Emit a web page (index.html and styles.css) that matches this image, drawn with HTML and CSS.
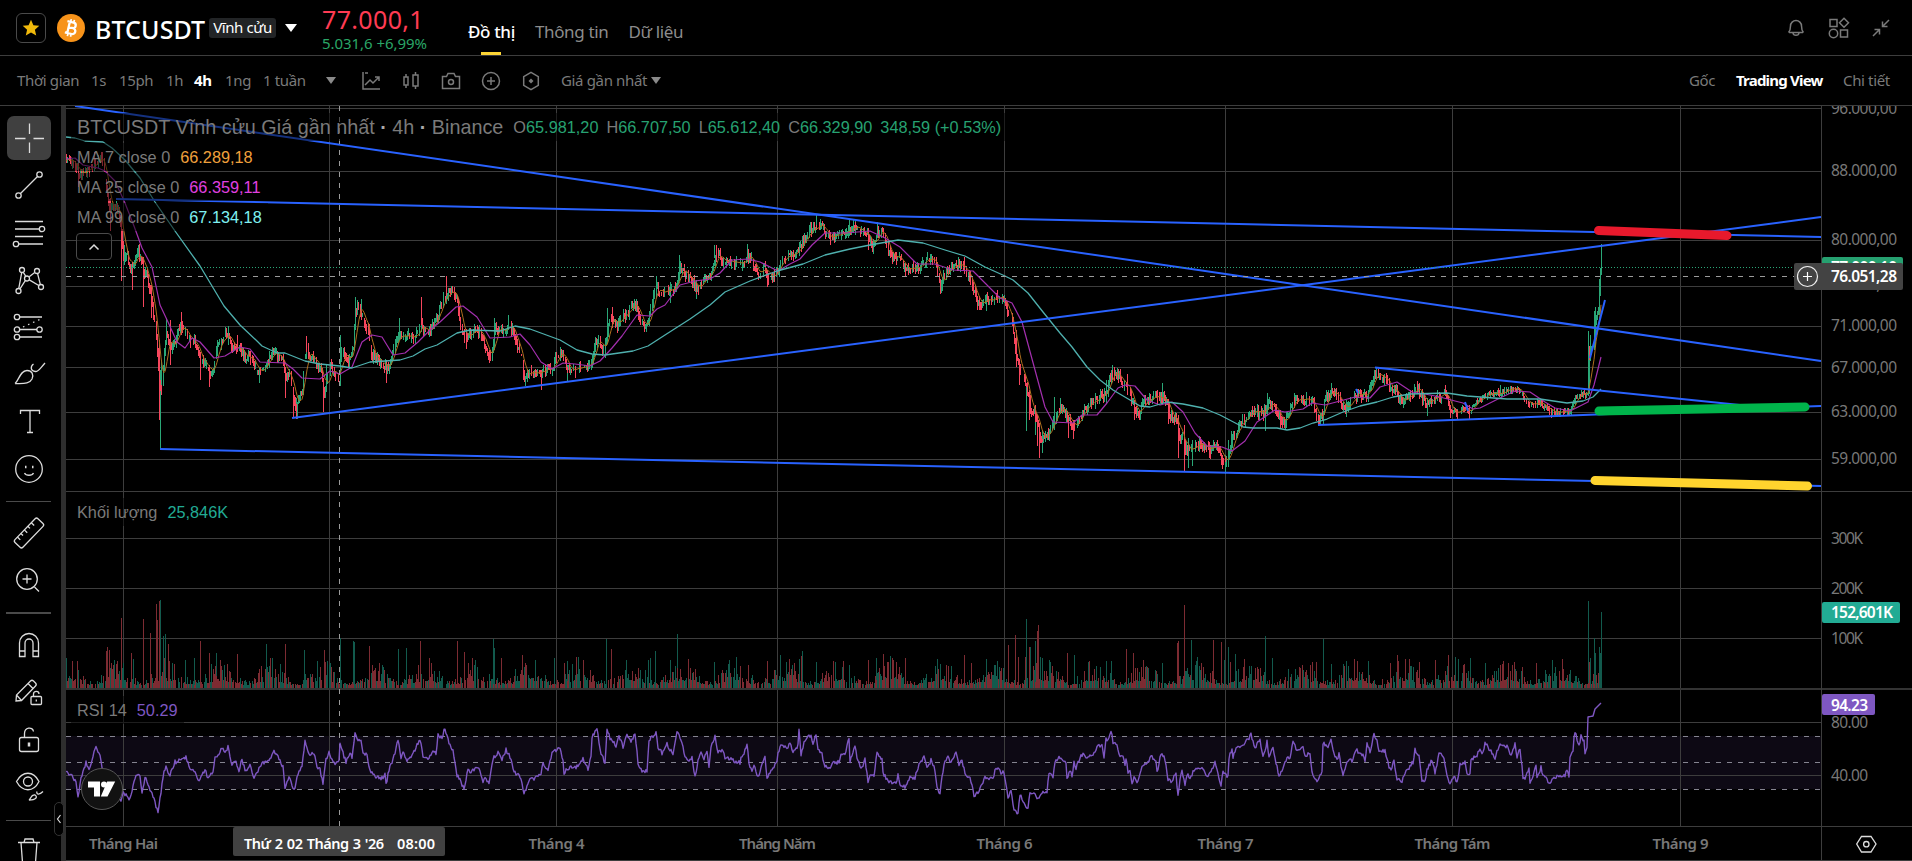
FILE: index.html
```
<!DOCTYPE html>
<html lang="vi">
  <head>
    <meta charset="UTF-8" />
    <meta name="viewport" content="width=device-width, initial-scale=1.0" />
    <title>77.000,1 | BTCUSDT Vĩnh cửu</title>
    <link rel="stylesheet" href="styles.css">
  </head>
  <body>
    <header class="topbar">
      <div class="star-box">
        <svg width="18" height="18" viewBox="0 0 18 18"><path d="M9 .8l2.4 5.4 5.9.6-4.4 3.9 1.3 5.8L9 13.5l-5.2 3 1.3-5.8L.7 6.8l5.9-.6z" fill="#f0b90b"/></svg>
      </div>
      <svg class="coin" width="28" height="28" viewBox="0 0 28 28">
        <circle cx="14" cy="14" r="14" fill="#f7931a"/>
        <g transform="rotate(13 14 14)" fill="none" stroke="#fff" stroke-width="2.3">
          <path d="M9 8.200h6.300a2.700 2.700 0 0 1 0 5.500H11.500M11.500 13.700h4.500a3 3 0 0 1 0 6H9M11.500 8v12"/>
          <path d="M12.300 5.300v3M15.500 5.300v3M12.300 19.700v3M15.500 19.700v3" stroke-width="1.700"/>
        </g>
      </svg>
      <h1 class="symbol">BTCUSDT</h1>
      <span class="badge">Vĩnh cửu</span>
      <i class="caret caret-lg"></i>
      <div class="price">
        <div class="price-last">77.000,1</div>
        <div class="price-change">5.031,6 +6,99%</div>
      </div>
      <nav class="tabs">
        <a class="tab tab-active">Đồ thị</a>
        <a class="tab">Thông tin</a>
        <a class="tab">Dữ liệu</a>
      </nav>
      <div class="top-icons">
        <svg width="18" height="20" viewBox="0 0 18 20"><path d="M2 14.500h14M1.500 14.500c2-2 2-3.500 2-6.500a5.500 5.500 0 0 1 11 0c0 3 0 4.500 2 6.500M6 15c.3 3 5.700 3 6 0"/></svg>
        <svg width="22" height="22" viewBox="0 0 22 22"><path d="M2 2.500h7v7H2zM12.500 13h7v7h-7zM16 1.300l4.500 4.500-4.500 4.500-4.500-4.500z"/><circle cx="5.500" cy="16.500" r="4.200"/></svg>
        <svg width="18" height="18" viewBox="0 0 18 18"><path d="M17 1l-6 6M10.500 2.500V7.500h5M1 17l6-6M2.500 10.500H7.500v5"/></svg>
      </div>
    </header>

    <div class="toolbar">
      <span class="t-time">Thời gian</span>
      <span class="t-1s">1s</span>
      <span class="t-15">15ph</span>
      <span class="t-1h">1h</span>
      <span class="t-4h active">4h</span>
      <span class="t-1d">1ng</span>
      <span class="t-1w">1 tuần</span>
      <i class="caret caret-grey"></i>
      <div class="tool-icons">
        <svg width="20" height="20" viewBox="0 0 20 20"><path d="M2 1v17h17M4 14l5-5 3 3 6-6M4 2h3M14 6h4v4"/></svg>
        <svg width="20" height="20" viewBox="0 0 20 20"><path d="M3 6h4v8H3zM5 3v3M5 14v3M12 4h5v11h-5zM14.500 1v3M14.500 15v3"/></svg>
        <svg width="20" height="20" viewBox="0 0 20 20"><path d="M1.500 5.500h4l1.500-3h6l1.500 3h4v12h-17z"/><circle cx="10" cy="11" r="2.500"/></svg>
        <svg width="20" height="20" viewBox="0 0 20 20"><circle cx="10" cy="10" r="8.500"/><path d="M10 6v8M6 10h8"/></svg>
        <svg width="20" height="20" viewBox="0 0 20 20"><path d="M10 1.300l7.300 4.300v8.800L10 18.700l-7.300-4.300V5.600z"/><path d="M10 7.500l2.500 2.500-2.500 2.500L7.500 10z" fill="#7a7a7a" stroke="none"/></svg>
      </div>
      <span class="t-last">Giá gần nhất</span>
      <i class="caret caret-grey caret-last"></i>
      <div class="views">
        <span class="v-org">Gốc</span>
        <span class="v-tv active">Trading View</span>
        <span class="v-det">Chi tiết</span>
      </div>
    </div>

    <main class="workspace">
      <aside class="draw-tools">
        <button class="draw selected"><svg viewBox="-22 -22 44 44"><path d="M-14 .5H-3.500M4.500 .5H15M.5-14.500V-4M.5 4.500V15"/></svg></button>
        <button class="draw"><svg viewBox="-22 -22 44 44"><circle cx="-10.500" cy="10.500" r="2.700"/><circle cx="10.500" cy="-10.500" r="2.700"/><path d="M-8.500 8.500l17-17"/></svg></button>
        <button class="draw"><svg viewBox="-22 -22 44 44"><path d="M-14-11.500H14M-14-4H10M-14 3.500H14M-10.500 11H14"/><circle cx="13" cy="-4" r="2.700"/><circle cx="-13" cy="11" r="2.700"/></svg></button>
        <button class="draw"><svg viewBox="-22 -22 44 44"><path d="M-10.200 8.300L-7.300-7.300M-5.700-7.700L-3.300-3.800M.2-3.200l5.500-4.200M8.600-6.400L11.300 4.300M.3-.1l9.500 5.600M-3.700 .6l-5.300 8.200"/><circle cx="-7" cy="-10" r="2.500"/><circle cx="8" cy="-9" r="2.500"/><circle cx="-2" cy="-1.500" r="2.500"/><circle cx="12" cy="7" r="2.500"/><circle cx="-10.500" cy="11" r="2.500"/></svg></button>
        <button class="draw"><svg viewBox="-22 -22 44 44"><path d="M-9.500-10H13M-9.500 2.500H8M-9.500 10H13"/><path d="M-6 0L13-8.500" stroke-dasharray="1.500 4"/><circle cx="-12" cy="-10" r="2.700"/><circle cx="-12" cy="2.500" r="2.700"/><circle cx="-12" cy="10" r="2.700"/><circle cx="10.500" cy="2.500" r="2.700"/></svg></button>
        <button class="draw"><svg viewBox="-22 -22 44 44"><path d="M-14 9.500c4-3 5-13 12-13 5 0 7 4 5 8.500-2 4-6 5-17 4.500M4.500-10c-3 2-3.500 7 2 7.500 3 .2 4-2.500 9.500-8.500"/></svg></button>
        <button class="draw"><svg viewBox="-22 -22 44 44"><path d="M-8.500-8v-3.500h19V-8M1-11.500V10.500M-2 10.500h6"/></svg></button>
        <button class="draw"><svg viewBox="-22 -22 44 44"><circle cx="0" cy="0" r="13.300"/><path d="M-4.500 4c1.500 3 7.500 3 9 0"/><path d="M-4-2h1.500M3-2h1.500" stroke-width="2.500"/></svg></button>
        <hr class="rule" />
        <button class="draw"><svg viewBox="-22 -22 44 44"><g transform="rotate(-46)"><rect x="-16.500" y="-5.500" width="33" height="11" rx="2"/><path d="M-11-5.500v4M-6-5.500v3M-1-5.500v4M4-5.500v3M9-5.500v4"/></g></svg></button>
        <button class="draw"><svg viewBox="-22 -22 44 44"><circle cx="-2" cy="-1" r="10.300"/><path d="M5.500 7l4.500 4.500M-6.500-1h9M-2-5.500v9"/></svg></button>
        <hr class="rule rule-bold" />
        <button class="draw"><svg viewBox="-22 -22 44 44"><path d="M-9.500 11.500V-2a9.500 9.500 0 0 1 19 0v13.500H4V-2a4 4 0 0 0-8 0v13.500zM-9.500 6H-4M4 6h5.500"/></svg></button>
        <button class="draw"><svg viewBox="-22 -22 44 44"><path d="M-13 8l.5-6L1.500-12c1-1 2-1 3 0l2 2c1 1 1 2 0 3L-7.500 7.500zM-12.500 2l5 5.500M-1-9.500l5 5"/><rect x="2" y="3.500" width="10.500" height="8" rx="1"/><path d="M4.500 3.500V1c0-3.500 5.500-3.500 5.500 0M7.300 6.500v2"/></svg></button>
        <button class="draw"><svg viewBox="-22 -22 44 44"><rect x="-9.500" y="-2.500" width="19" height="14" rx="2"/><path d="M-4.500-2.500v-4c0-6 8-7.500 9-2"/><path d="M0 2.500v4" stroke-width="2.500"/></svg></button>
        <button class="draw"><svg viewBox="-22 -22 44 44"><path d="M-12.500-5.500c6-11 17-11 22.500 0-5.500 11-16.500 11-22.500 0z"/><circle cx="-1" cy="-5.500" r="4.500"/><path d="M0 13c2-1 2-6 6-5 3 2 1 5-6 5zM8 4.500c-1 3 2 4 6 0"/></svg></button>
        <hr class="rule rule-low" />
        <button class="draw"><svg viewBox="-22 -22 44 44"><path d="M-11-9.500h22M-5-9.500l1-3.500h8l1 3.500M-8-9.500l1.500 20h13L8-9.500"/></svg></button>
        <div class="collapse"><svg width="6" height="10" viewBox="0 0 6 10"><path d="M4.500 1L1.500 5l3 4"/></svg></div>
      </aside>

      <section class="chart-area">
        <svg id="chart" viewBox="66 106 1846 755"></svg>

        <div class="legend legend-price">
          <div class="legend-row legend-title">
            <span class="name">BTCUSDT Vĩnh cửu Giá gần nhất <b>·</b> 4h <b>·</b> Binance</span>
            <span class="ohlc">O<em>65.981,20</em></span>
            <span class="ohlc">H<em>66.707,50</em></span>
            <span class="ohlc">L<em>65.612,40</em></span>
            <span class="ohlc">C<em>66.329,90</em></span>
            <span class="ohlc"><em>348,59 (+0.53%)</em></span>
          </div>
          <div class="legend-row">MA 7 close 0<span class="ma7">66.289,18</span></div>
          <div class="legend-row">MA 25 close 0<span class="ma25">66.359,11</span></div>
          <div class="legend-row">MA 99 close 0<span class="ma99">67.134,18</span></div>
          <button class="legend-toggle"><svg width="12" height="8" viewBox="0 0 12 8"><path d="M1.500 6.500L6 2l4.500 4.500"/></svg></button>
        </div>
        <div class="legend legend-volume">
          <div class="legend-row">Khối lượng<span class="vol">25,846K</span></div>
        </div>
        <div class="legend legend-rsi">
          <div class="legend-row">RSI 14<span class="rsi">50.29</span></div>
        </div>
        <div class="tv-logo">
          <svg width="28" height="16" viewBox="0 0 28 16"><path d="M0 .5h12v15H6V6.500H0zM19.500 15.500h-6.700L19.200.5h8z"/><circle cx="16" cy="3.500" r="3"/></svg>
        </div>
      </section>
    </main>
    <script src="chart.js"></script>
  </body>
</html>
```
FILE: styles.css
```
* {
  box-sizing: border-box;
}

html,
body {
  height: 100%;
  margin: 0;
  padding: 0;
  overflow: hidden;
}

body {
  display: flex;
  flex-direction: column;
  background: #000;
  color: #7a7a7a;
  font-family: "Noto Sans", "Open Sans", sans-serif;
  font-size: 15px;
}

svg {
  display: block;
  flex: none;
}

/* header */
.topbar {
  display: flex;
  align-items: flex-start;
  height: 56px;
  flex: none;
  padding-left: 16px;
  border-bottom: 1px solid #3d3d3d;
  white-space: nowrap;
}

.star-box {
  display: flex;
  align-items: center;
  justify-content: center;
  width: 30px;
  height: 30px;
  margin-top: 13px;
  border: 1px solid #4a4a4a;
  border-radius: 6px;
}

.coin {
  margin: 14px 0 0 11px;
}

.symbol {
  width: 114px;
  margin: 13px 0 0 10px;
  font-size: 25px;
  font-weight: 500;
  line-height: 33px;
  letter-spacing: 0.1px;
  color: #fff;
}

.badge {
  width: 67px;
  height: 20px;
  margin-top: 18px;
  border-radius: 3px;
  background: #222426;
  color: #fff;
  font-size: 15px;
  line-height: 19px;
  letter-spacing: -0.4px;
  text-align: center;
}

.caret {
  width: 0;
  height: 0;
  border: 6px solid transparent;
  border-top: 8px solid #fff;
  border-bottom: 0;
}

.caret-lg {
  margin: 24px 0 0 9px;
}

.price {
  width: 146px;
  margin-left: 25px;
}

.price-last {
  margin-top: 4px;
  font-size: 25px;
  line-height: 30px;
  letter-spacing: 0.35px;
  color: #ff3b53;
}

.price-change {
  font-size: 15px;
  line-height: 18px;
  letter-spacing: -0.05px;
  color: #2aa667;
}

.tabs {
  display: flex;
  gap: 20px;
}

.tab {
  display: flex;
  flex-direction: column;
  align-items: center;
  height: 55px;
  padding-top: 20px;
  color: #8c8c8c;
  font-size: 17px;
  line-height: 24px;
  letter-spacing: -0.35px;
}

.tab-active {
  color: #fff;
  font-weight: 500;
}

.tab-active::after {
  content: "";
  width: 20px;
  height: 3px;
  margin-top: 8px;
  background: #fcd535;
}

.top-icons {
  display: flex;
  align-items: center;
  gap: 22px;
  height: 55px;
  margin-left: auto;
  padding-right: 22px;
}

.top-icons svg:first-child {
  margin-right: 1px;
}

.top-icons svg,
.tool-icons svg {
  fill: none;
  stroke: #7a7a7a;
  stroke-width: 1.5;
}

/* interval bar */
.toolbar {
  display: flex;
  align-items: center;
  flex: none;
  height: 50px;
  padding-left: 17px;
  border-bottom: 1px solid #3d3d3d;
  white-space: nowrap;
  letter-spacing: -0.35px;
}

.toolbar span {
  flex: none;
  margin-top: -2px;
}

.active {
  color: #fff;
  font-weight: 700;
}

.t-time { width: 74px; }
.t-1s { width: 28px; }
.t-15 { width: 47px; }
.t-1h { width: 28px; }
.t-4h { width: 31px; }
.t-1d { width: 38px; }
.t-1w { width: 63px; }
.t-last { width: 90px; }

.caret-grey {
  border-width: 5px;
  border-top: 7px solid #8a8a8a;
  border-bottom: 0;
}

.tool-icons {
  display: flex;
  gap: 20px;
  margin: 0 20px 0 25px;
}

.views {
  display: flex;
  margin-left: auto;
}

.v-org { width: 47px; }
.v-tv {
  width: 107px;
  letter-spacing: -0.8px;
}
.v-det { width: 69px; }

/* left rail */
.workspace {
  display: flex;
  flex: 1;
  min-height: 0;
}

.draw-tools {
  position: relative;
  display: flex;
  flex-direction: column;
  align-items: center;
  flex: none;
  width: 66px;
  padding: 8.300px 4px 0 0;
  border-right: 5px solid #2e2e2e;
}

.draw {
  display: flex;
  align-items: center;
  justify-content: center;
  flex: none;
  width: 44px;
  height: 47.300px;
  padding: 0;
  border: 0;
  background: none;
}

.draw svg {
  width: 44px;
  height: 44px;
  fill: none;
  stroke: #dcdcdc;
  stroke-width: 1.3;
}

.selected svg {
  border-radius: 7px;
  background: #404040;
}

.rule {
  flex: none;
  width: 45px;
  height: 1px;
  margin: 8px 0 7.700px;
  border: 0;
  background: #4a4a4a;
}

.rule-bold {
  height: 2px;
}

.rule-low {
  margin: 9px 0 8px;
}

.collapse {
  position: absolute;
  left: 54px;
  top: 696px;
  display: flex;
  align-items: center;
  justify-content: center;
  width: 10px;
  height: 34px;
  border: 1px solid #333;
  border-radius: 5px;
  background: #000;
}

.collapse svg {
  fill: none;
  stroke: #ddd;
  stroke-width: 1.2;
}

/* chart */
.chart-area {
  position: relative;
  flex: 1;
}

#chart {
  width: 1846px;
  height: 755px;
}

.grid {
  fill: none;
  stroke: #3d3d3d;
  shape-rendering: crispEdges;
}

.cross {
  stroke: #9b9b9b;
  stroke-dasharray: 5 6;
  shape-rendering: crispEdges;
}

.bars {
  fill: none;
  shape-rendering: crispEdges;
}

.line {
  fill: none;
  stroke-linejoin: round;
}

.trend {
  stroke: #2962ff;
  stroke-width: 2;
}

.marker {
  stroke-width: 9;
  stroke-linecap: round;
}

.axis-text {
  fill: #787878;
  font-family: "Noto Sans", sans-serif;
  font-size: 15.500px;
}

.axis-month {
  font-size: 15px;
  font-weight: 600;
  text-anchor: middle;
}

.axis-tag {
  fill: #fff;
  font-weight: 600;
}

.axis-time {
  font-size: 14.500px;
  word-spacing: 1px;
}

.legend {
  position: absolute;
  left: 5px;
  font-family: "Liberation Sans", Arial, sans-serif;
  font-size: 16.300px;
}

.legend-price {
  top: 7px;
}

.legend-volume {
  top: 392px;
}

.legend-rsi {
  top: 590px;
}

.legend-row {
  display: flex;
  align-items: center;
  width: fit-content;
  height: 28px;
  margin-bottom: 2px;
  padding: 0 6px;
  background: rgba(0, 0, 0, 0.5);
  white-space: nowrap;
}

.legend-row > span {
  margin-left: 10px;
}

.legend-title .name {
  margin-left: 0;
  font-size: 19.800px;
}

.legend-title .ohlc {
  margin-left: 8px;
}

.legend-title .name + .ohlc {
  margin-left: 10px;
}

.legend-title b {
  color: #aaa;
}

.legend em {
  color: #27a272;
  font-style: normal;
}

.ma7 { color: #f0a03c; }
.ma25 { color: #e040e0; }
.ma99 { color: #7ff0f0; }
.vol { color: #22ab94; }
.rsi { color: #7e57c2; }

.legend-toggle {
  display: flex;
  align-items: center;
  justify-content: center;
  width: 36px;
  height: 27px;
  margin: 2px 0 0 5px;
  border: 1px solid #4a4a4a;
  border-radius: 4px;
  background: rgba(0, 0, 0, 0.5);
}

.legend-toggle svg {
  fill: none;
  stroke: #ddd;
  stroke-width: 1.5;
}

.tv-logo {
  position: absolute;
  left: 15px;
  top: 662px;
  display: flex;
  align-items: center;
  justify-content: center;
  width: 42px;
  height: 42px;
  border: 1px solid #565656;
  border-radius: 50%;
  background: #121212;
}

.tv-logo svg {
  fill: #fff;
}
```
FILE: chart.js
```
const chart = document.getElementById("chart");
const LEFT = 66;
const RIGHT = 1821;
const LAST = 1601;
const UP = "#2aa777";
const DOWN = "#f6465d";

// close line of the price pane, "x,y" pairs
const price = parse(`66,158 70,160 75,165 79,175 84,172 89,170 95,163 99,157 103,162 106,187 109,210 113,207 118,208 121,233 123,257 127,252
129,267 133,267 136,253 138,252 141,257 144,273 146,267 149,287 153,313 156,333 159,383 161,393 163,367 166,333 170,347 173,347 177,333
181,323 184,330 187,335 191,343 195,342 199,357 202,363 205,362 210,373 213,367 216,348 221,343 224,335 228,333 231,348 236,347 240,350
245,357 249,355 254,367 259,372 262,367 267,362 271,355 277,355 282,357 286,377 289,373 293,393 296,410 298,397 302,390 304,360 307,347
310,360 314,358 318,367 321,372 324,393 327,377 330,365 334,372 337,380 339,373 341,347 345,357 347,363 350,355 353,347 355,313 357,303
361,313 364,322 368,330 371,355 377,357 380,362 386,367 389,367 393,348 396,340 399,333 404,338 409,335 414,340 418,327 421,323 425,330
429,330 433,323 437,320 440,303 445,297 448,292 453,293 457,300 459,320 462,330 466,338 471,332 477,330 481,333 486,348 491,357 495,327
499,330 504,330 508,325 512,327 516,343 521,357 524,377 529,373 536,372 541,375 546,367 552,370 556,357 560,350 563,355 566,367 570,372
577,368 588,367 592,357 595,343 598,337 601,347 604,353 608,323 610,318 613,318 617,327 622,313 625,317 630,307 636,303 640,323 645,327
648,320 652,300 657,287 660,293 665,290 672,290 677,282 680,267 683,270 687,277 693,282 697,290 702,280 708,277 712,270 715,255 718,253
722,263 727,258 733,262 742,263 747,255 752,260 755,270 760,275 764,265 768,278 773,275 778,270 782,257 790,255 797,253 800,247 805,237
810,230 816,225 822,225 827,238 833,238 840,235 849,230 856,227 862,232 867,235 872,247 877,233 882,230 888,250 893,257 898,257 903,265
907,268 913,268 920,265 927,260 935,263 940,287 943,277 948,268 957,263 963,267 968,277 973,290 977,302 987,300 997,297 1004,299 1008,313
1012,323 1016,353 1020,370 1025,383 1030,407 1037,417 1040,440 1045,437 1050,430 1053,420 1058,410 1060,403 1065,413 1070,423 1075,427
1080,415 1085,408 1092,403 1100,397 1107,393 1108,380 1113,372 1117,373 1122,382 1127,387 1132,402 1138,415 1143,403 1152,397 1162,397
1167,403 1170,418 1177,417 1179,440 1183,433 1185,450 1190,448 1200,443 1210,450 1217,443 1222,460 1227,462 1230,447 1233,437 1238,427
1245,417 1253,412 1263,413 1268,403 1277,410 1282,423 1287,417 1293,400 1303,398 1312,400 1317,417 1322,417 1325,397 1332,390 1338,397
1345,410 1350,400 1357,395 1367,395 1371,383 1376,373 1382,377 1387,382 1392,390 1396,387 1398,400 1405,398 1412,393 1417,387 1422,397
1427,403 1433,397 1440,397 1445,390 1450,410 1458,413 1463,407 1470,413 1473,403 1483,398 1490,393 1500,393 1505,390 1518,387 1523,397
1530,405 1538,402 1545,407 1552,412 1560,412 1570,411 1575,397 1583,393 1588,393 1589,357 1591,347 1594,343 1595,323 1598,307 1600,280 1601,262`);

// long wicks: x, top, bottom, up(1)/down(0)
const wicks = [
  [73, 160, 168, 0], [78, 175, 187, 0], [94, 152, 164, 0], [110, 198, 231, 0], [121, 232, 281, 0], [124, 245, 265, 1], [132, 262, 290, 0],
  [143, 257, 307, 0], [151, 285, 318, 0], [159, 340, 420, 0], [160, 370, 449, 1], [161, 360, 395, 1], [166, 318, 345, 1], [170, 320, 365, 0],
  [181, 312, 335, 0], [200, 352, 380, 0], [209, 365, 387, 0], [228, 326, 345, 1], [237, 335, 352, 0], [259, 370, 383, 1], [285, 372, 398, 0],
  [293, 390, 418, 0], [296, 398, 418, 1], [306, 336, 352, 0], [323, 378, 412, 0], [326, 365, 392, 1], [340, 335, 386, 1], [355, 297, 330, 1],
  [361, 299, 318, 1], [386, 365, 383, 0], [399, 318, 340, 1], [421, 297, 325, 0], [446, 276, 296, 0], [466, 330, 349, 0], [489, 350, 363, 0],
  [494, 318, 350, 1], [508, 315, 330, 1], [523, 360, 380, 0], [541, 370, 390, 0], [567, 365, 382, 1], [607, 308, 330, 1], [612, 307, 328, 0],
  [636, 299, 312, 1], [656, 276, 295, 1], [670, 282, 303, 1], [679, 255, 278, 1], [696, 280, 299, 1], [714, 245, 258, 1], [716, 245, 262, 0],
  [747, 244, 262, 1], [767, 270, 287, 0], [816, 214, 228, 1], [849, 219, 236, 1], [855, 221, 235, 1], [868, 235, 250, 0], [877, 222, 238, 1],
  [905, 265, 276, 0], [940, 280, 294, 0], [964, 257, 274, 0], [979, 300, 310, 0], [986, 295, 311, 1], [1016, 330, 367, 0], [1019, 360, 385, 0],
  [1026, 385, 431, 1], [1029, 398, 420, 0], [1035, 405, 435, 1], [1037, 420, 446, 0], [1039, 428, 458, 0], [1042, 430, 453, 1], [1054, 397, 430, 1],
  [1060, 398, 414, 1], [1068, 415, 438, 0], [1073, 420, 439, 0], [1106, 380, 404, 1], [1112, 365, 380, 1], [1127, 374, 395, 0], [1134, 400, 420, 0],
  [1162, 383, 398, 1], [1168, 400, 424, 0], [1178, 415, 458, 0], [1184, 425, 471, 0], [1188, 438, 468, 1], [1192, 440, 466, 1], [1210, 445, 459, 0],
  [1222, 455, 469, 0], [1225, 455, 474, 1], [1228, 440, 467, 1], [1231, 431, 450, 1], [1265, 405, 431, 1], [1267, 393, 412, 1], [1280, 410, 429, 0],
  [1294, 393, 402, 1], [1318, 415, 425, 0], [1331, 383, 392, 1], [1346, 400, 417, 1], [1376, 368, 380, 1], [1417, 381, 390, 0], [1427, 400, 416, 1],
  [1445, 385, 396, 0], [1450, 405, 418, 0], [1457, 410, 420, 0], [1469, 405, 419, 0], [1500, 385, 396, 1], [1551, 408, 418, 0], [1588, 331, 396, 1],
  [1589, 346, 360, 0], [1590, 335, 358, 1], [1594, 311, 350, 1], [1595, 307, 335, 1], [1599, 279, 315, 1], [1600, 268, 292, 1], [1601, 244, 275, 1],
];

const ma25 = `66,159 75,158 83,165 98,168 105,171 115,181 125,203 134,226 142,248 152,267 160,305 168,322 177,342 185,348 192,338 200,342 214,358
225,356 240,347 250,349 260,362 285,363 293,369 302,378 320,379 330,371 340,374 352,367 362,342 372,335 382,337 393,355 405,353 418,342 430,330
440,322 456,307 463,306 477,317 490,338 510,337 520,334 530,345 541,362 552,369 563,363 575,364 590,366 600,361 612,348 622,336 637,315 650,316
657,309 665,305 680,285 695,281 710,279 720,273 732,260 748,259 760,262 778,271 790,264 800,259 812,245 825,233 845,233 870,231 885,238 900,247
917,264 935,264 953,270 973,271 985,283 1000,298 1012,303 1022,322 1035,370 1045,407 1053,422 1073,423 1082,415 1097,415 1107,403 1118,388
1125,385 1135,386 1147,400 1160,405 1172,402 1183,412 1195,433 1207,446 1222,447 1232,451 1245,441 1257,422 1275,410 1285,412 1303,409 1312,403
1325,405 1340,401 1355,397 1370,398 1380,387 1397,382 1412,392 1425,394 1440,397 1455,401 1463,403 1473,409 1480,408 1500,398 1515,391 1530,392
1545,402 1555,408 1570,411 1580,406 1588,402 1594,385 1601,357`;

const ma99 = `66,137 75,138 85,141 103,142 112,148 125,160 140,178 155,202 175,231 200,266 224,306 240,325 257,341 262,346 277,353 285,353 305,361
320,364 340,366 352,368 370,362 400,360 413,356 425,349 437,345 457,333 470,330 500,331 515,326 530,329 560,340 577,350 592,354 605,355 633,351
648,346 665,335 690,319 710,305 725,292 750,281 777,271 803,264 825,255 850,249 870,245 898,240 923,243 945,250 965,256 985,267 1005,276 1013,280
1028,293 1043,312 1060,333 1072,347 1087,367 1100,380 1113,390 1130,400 1140,406 1150,407 1167,402 1183,404 1203,408 1220,415 1243,427 1253,428
1277,428 1287,430 1300,428 1313,423 1327,419 1343,412 1360,406 1377,402 1393,397 1410,394 1447,393 1467,396 1507,399 1540,399 1567,403 1583,401
1593,397 1601,389`;

const rsi = parse(`66,772 71,775 76,783 78,797 81,777 86,763 89,770 96,747 100,757 104,777 110,784 121,803 123,793 130,799 135,777 140,775 142,793
145,777 148,783 154,800 158,813 164,770 166,767 170,775 175,762 182,760 186,757 189,767 193,770 199,780 205,770 208,778 213,772 215,757 220,753
221,747 225,753 228,746 232,765 236,762 239,770 242,760 246,772 250,765 254,778 262,763 268,760 274,752 279,758 283,767 285,788 289,778 294,790
298,775 302,765 305,742 308,753 315,755 317,768 320,770 323,783 326,760 329,753 334,763 339,762 340,745 346,762 350,753 352,757 355,732 358,740
361,740 363,755 367,755 370,772 377,777 382,778 385,775 386,785 389,770 395,753 398,740 401,757 404,752 407,762 412,755 420,740 423,755 428,760
433,750 436,755 438,735 442,737 445,728 448,740 453,750 457,775 464,788 468,770 472,772 477,767 480,770 483,782 486,777 489,785 493,758 499,752
502,760 506,750 511,758 514,772 520,777 524,793 530,780 541,775 543,762 548,772 552,753 560,748 563,760 564,773 568,768 577,767 583,759 588,769
591,757 592,737 597,729 600,750 605,763 607,730 610,738 616,746 619,735 623,747 627,733 631,743 635,733 638,763 642,772 647,771 649,740 656,733
658,748 662,753 667,743 670,750 673,753 677,732 682,742 685,757 689,763 692,757 695,777 698,760 701,752 704,758 707,752 709,766 711,747 715,736
718,752 722,750 725,757 732,760 740,763 742,755 744,753 747,743 749,763 752,772 754,765 758,777 763,762 765,757 767,777 772,768 777,763 778,753
781,743 787,748 790,743 793,752 798,745 799,731 801,755 804,743 811,734 813,744 816,735 818,750 822,752 824,765 829,769 833,763 839,762 841,753
845,755 849,737 850,762 855,747 858,762 862,768 865,758 868,782 871,773 874,777 877,753 882,760 883,773 889,782 897,782 898,775 901,787 905,787
910,777 915,778 918,767 924,757 927,768 931,760 934,767 937,787 940,793 944,763 948,757 951,763 956,753 959,765 962,760 965,773 970,778 974,795
978,793 982,785 985,778 993,779 995,770 998,767 1001,773 1004,772 1008,798 1011,790 1014,810 1018,813 1020,795 1025,805 1028,807 1030,792
1035,795 1038,800 1042,792 1047,792 1049,773 1053,778 1055,762 1060,757 1066,763 1067,778 1070,770 1072,777 1074,762 1076,770 1078,762 1083,753
1087,758 1092,755 1097,747 1102,745 1104,759 1106,738 1108,740 1111,730 1113,743 1117,745 1119,755 1123,755 1125,767 1126,757 1128,772 1130,770
1132,784 1134,778 1138,782 1142,768 1147,763 1151,757 1156,760 1157,773 1160,757 1162,752 1166,763 1168,780 1172,781 1176,773 1178,797 1180,780
1182,770 1185,785 1188,773 1190,780 1193,772 1199,767 1203,770 1207,777 1211,770 1215,763 1218,773 1221,785 1223,773 1228,777 1229,758 1232,748
1233,758 1236,747 1243,745 1247,740 1251,735 1255,748 1260,740 1263,758 1267,742 1269,755 1273,748 1276,763 1279,775 1283,768 1286,760 1290,757
1293,743 1297,750 1303,748 1305,757 1310,753 1312,773 1317,782 1322,772 1323,743 1328,747 1331,741 1334,753 1337,760 1339,753 1343,777 1347,762
1353,760 1356,750 1363,755 1365,762 1367,743 1370,752 1374,735 1377,740 1379,752 1385,751 1388,763 1391,772 1394,760 1397,780 1402,781 1406,772
1413,762 1415,749 1419,757 1422,782 1425,780 1427,770 1432,760 1435,773 1439,755 1443,755 1446,770 1449,783 1455,777 1457,783 1460,765 1465,762
1467,775 1470,775 1471,760 1477,755 1480,751 1483,753 1485,742 1490,750 1495,758 1499,745 1507,746 1511,757 1515,744 1517,757 1520,748 1523,777
1525,780 1529,768 1530,782 1533,777 1536,764 1537,778 1541,767 1543,775 1546,775 1549,784 1554,778 1560,775 1565,775 1567,770 1569,778 1570,757
1573,750 1574,737 1576,732 1578,745 1580,743 1581,734 1584,742 1585,752 1587,747 1588,717 1593,716 1595,709 1601,703`);

// volume peaks, "x,top" pairs; everything between them is low noise
const volDown = `77,661 106,651 107,647 109,650 121,618 131,653 143,619 150,633 156,604 157,620 159,601 168,644 200,641 209,653 237,654 285,644 324,650
369,646 420,641 457,641 464,652 472,658 501,658 522,655 564,663 611,649 748,665 767,661 801,656 868,660 883,654 905,658 964,655 971,663 1008,645
1015,635 1018,657 1025,657 1029,647 1037,631 1038,625 1052,666 1067,653 1089,661 1126,649 1133,653 1177,643 1178,641 1184,605 1213,640 1221,642
1230,662 1312,662 1316,662 1390,663 1397,655 1419,662 1435,660 1448,655 1500,665 1522,667 1536,663 1589,662`;
const volUp = `133,659 160,600 163,636 165,634 185,660 194,658 216,653 266,644 304,650 340,638 353,641 354,642 398,649 406,648 493,639 494,648 554,658
567,661 606,639 626,660 648,660 650,658 655,651 670,660 677,634 714,662 780,655 799,659 802,651 816,662 849,665 876,658 986,659 1026,619 1030,647
1035,641 1040,657 1042,658 1074,655 1106,661 1111,661 1162,663 1191,640 1224,660 1228,647 1235,654 1265,636 1272,658 1323,639 1331,664 1368,661
1470,658 1485,663 1545,670 1588,601 1590,658 1594,638 1595,653 1599,647 1600,653 1601,612`;

function parse(text) {
  return text.trim().split(/\s+/).map((pair) => pair.split(",").map(Number));
}

function at(points, x) {
  let i = 1;
  while (i < points.length - 1 && points[i][0] < x) i++;
  const [x0, y0] = points[i - 1];
  const [x1, y1] = points[i];
  return y0 + ((y1 - y0) * (x - x0)) / (x1 - x0);
}

let seed = 20260302;
function rand() {
  seed = (seed * 1664525 + 1013904223) % 4294967296;
  return seed / 4294967296;
}

function add(tag, attrs, text) {
  const el = document.createElementNS("http://www.w3.org/2000/svg", tag);
  for (const key in attrs) el.setAttribute(key, attrs[key]);
  if (text) el.textContent = text;
  chart.appendChild(el);
  return el;
}

function line(points, stroke, width) {
  add("polyline", { class: "line", points, stroke, "stroke-width": width });
}

function seg(x1, y1, x2, y2, cls, stroke) {
  add("line", { x1, y1, x2, y2, class: cls, ...(stroke ? { stroke } : {}) });
}

// grid
const months = [[123, "Tháng Hai"], [329, ""], [556, "Tháng 4"], [777, "Tháng Năm"], [1004, "Tháng 6"], [1225, "Tháng 7"], [1452, "Tháng Tám"], [1680, "Tháng 9"]];
add("rect", { x: LEFT, y: 736, width: RIGHT - LEFT, height: 53, fill: "#0d0914" });
months.forEach(([x]) => seg(x + 0.5, 106, x + 0.5, 826, "grid"));
[108, 171, 240, 286, 326, 367, 412, 459, 538, 588, 638, 722, 775].forEach((y) => seg(LEFT, y + 0.5, RIGHT, y + 0.5, "grid"));
[491, 826, 860].forEach((y) => seg(LEFT, y + 0.5, 1912, y + 0.5, "grid"));

// volume
const vol = { up: "", down: "" };
for (let x = LEFT; x <= LAST; x++) {
  if (rand() < 0.1) continue;
  const busy = 0.6 + 0.4 * Math.sin(x / 8.2);
  const h = 2 + busy * (5 + 25 * Math.pow(rand(), 1.9));
  vol[rand() < 0.5 ? "up" : "down"] += `M${x + 0.5} 688v${-Math.round(h)}`;
}
parse(volUp).forEach(([x, y]) => (vol.up += `M${x + 0.5} 688V${y}`));
parse(volDown).forEach(([x, y]) => (vol.down += `M${x + 0.5} 688V${y}`));
add("path", { class: "bars", d: vol.up, stroke: "#125a4d" });
add("path", { class: "bars", d: vol.down, stroke: "#7d2b32" });
add("rect", { x: LEFT, y: 688, width: 1846, height: 2, fill: "#333" });

// candles
const bars = { up: "", down: "" };
const closes = [];
let prev = price[0][1];
for (let x = LEFT; x <= LAST; x++) {
  const close = at(price, x) + (rand() - 0.5) * (x > 1440 ? 4 : 7);
  closes.push([x, close]);
  const wick = x > 1440 ? 3 : 5;
  const top = Math.min(prev, close) - rand() * wick;
  const bottom = Math.max(prev, close) + rand() * wick;
  if (rand() > 0.17) bars[close < prev ? "up" : "down"] += `M${x + 0.5} ${Math.round(top)}V${Math.round(bottom) + 1}`;
  prev = close;
}
wicks.forEach(([x, top, bottom, up]) => (bars[up ? "up" : "down"] += `M${x + 0.5} ${top}V${bottom}`));
add("path", { class: "bars", d: bars.up, stroke: UP });
add("path", { class: "bars", d: bars.down, stroke: DOWN });

// moving averages
const ma7 = closes.map(([x], i) => {
  const part = closes.slice(Math.max(0, i - 7), i + 1);
  return `${x},${(part.reduce((sum, c) => sum + c[1], 0) / part.length).toFixed(1)}`;
});
line(ma7.join(" "), "#b0701f", 1);
line(ma25, "#a32fae", 1.2);
line(ma99, "#4fb0ae", 1.3);

// trend lines
[
  [75, 106, 1821, 361], [116, 199, 1821, 237], [292, 418, 1821, 217], [160, 449, 1821, 486],
  [1375, 367.5, 1740, 405], [1318, 425, 1821, 406], [1590, 358, 1605, 300], [1356, 389, 1358, 393], [1465, 402, 1468, 411],
].forEach(([x1, y1, x2, y2]) => seg(x1, y1, x2, y2, "trend"));

// last price + crosshair
add("line", { x1: LEFT, y1: 267.5, x2: RIGHT, y2: 267.5, stroke: UP, "stroke-dasharray": "1 2", "shape-rendering": "crispEdges" });
seg(LEFT, 276.5, 1794, 276.5, "cross");
seg(339.5, 106, 339.5, 826, "cross");

// highlighted levels
seg(1598.5, 230.500, 1727, 235.500, "marker", "#e8192c");
seg(1599, 411, 1805, 407, "marker", "#00b44b");
seg(1595, 480.500, 1807.500, 486, "marker", "#ffd42e");

// rsi
[736, 762, 789].forEach((y) => add("line", { x1: LEFT, y1: y + 0.5, x2: RIGHT, y2: y + 0.5, stroke: "#858490", "stroke-dasharray": "5 6", "shape-rendering": "crispEdges" }));
let rsiPoints = "";
for (let x = LEFT; x <= LAST; x++) {
  const drift = x < 1588 ? (rand() - 0.5) * 4 : 0;
  rsiPoints += `${x},${(at(rsi, x) + drift).toFixed(1)} `;
}
line(rsiPoints, "#7e57c2", 1.4);

// axes
seg(RIGHT + 0.5, 106, RIGHT + 0.5, 860, "grid");
function label(x, y, text, width, cls = "") {
  add("text", { x, y, class: "axis-text " + cls, textLength: width }, text);
}
[["96.000,00", 113.5], ["88.000,00", 175.5], ["80.000,00", 244.5], ["75.000,00", 290], ["71.000,00", 330.5], ["67.000,00", 372.5], ["63.000,00", 416.5], ["59.000,00", 463.5]]
  .forEach(([text, y]) => label(1831, y, text, 66));
label(1831, 544, "300K", 32);
label(1831, 594, "200K", 32);
label(1831, 644, "100K", 32);
label(1831, 728, "80.00", 37);
label(1831, 781, "40.00", 37);
months.forEach(([x, text]) => text && label(x + 0.5, 849, text, { "Tháng Hai": 69, "Tháng Năm": 77, "Tháng Tám": 76 }[text] || 56, "axis-month"));

add("rect", { x: 1822, y: 257, width: 81, height: 20, rx: 2, fill: "#26a070" });
label(1831, 272.5, "77.000,10", 66, "axis-tag");
add("rect", { x: 1794, y: 263, width: 109, height: 27, rx: 2, fill: "#434343" });
label(1831, 281.5, "76.051,28", 66, "axis-tag");
add("circle", { cx: 1807.5, cy: 276.5, r: 10, fill: "none", stroke: "#eee", "stroke-width": 1.2 });
add("path", { d: "M1807.5 272v9M1803 276.500h9", stroke: "#fff", "stroke-width": 1.2 });
add("rect", { x: 1822, y: 602, width: 78, height: 21, rx: 2, fill: "#22ab94" });
label(1831, 617.5, "152,601K", 62, "axis-tag");
add("rect", { x: 1822, y: 694, width: 53, height: 21, rx: 2, fill: "#7e57c2" });
label(1831, 710.5, "94.23", 37, "axis-tag");
add("rect", { x: 233, y: 827, width: 212, height: 29, rx: 2, fill: "#414141" });
label(244, 849, "Thứ 2 02 Tháng 3 '26", 140, "axis-tag axis-time");
label(397, 849, "08:00", 38, "axis-tag axis-time");
add("path", { d: "M1861.500 836.500h9.500l5 7.500-5 8h-9.500l-4.800-8z", fill: "none", stroke: "#ddd", "stroke-width": 1.3 });
add("circle", { cx: 1866.3, cy: 844.2, r: 2.7, fill: "none", stroke: "#ddd", "stroke-width": 1.3 });
```
